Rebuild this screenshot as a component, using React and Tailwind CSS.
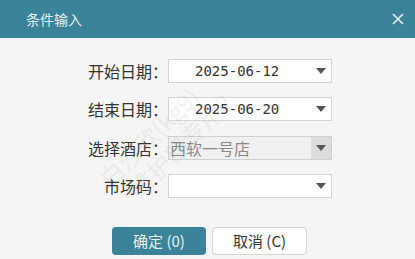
import React from 'react';

const Arrow = () => (
  <svg width="10" height="6" viewBox="0 0 10 6" className="block">
    <path d="M0 0 L10 0 L5 6 Z" fill="#555555" />
  </svg>
);

const rows = [
  { label: '开始日期：', value: '2025-06-12', type: 'date' },
  { label: '结束日期：', value: '2025-06-20', type: 'date' },
  { label: '选择酒店：', value: '西软一号店', type: 'disabled' },
  { label: '市场码：', value: '', type: 'empty' },
];

const Field = ({ row }) => {
  const disabled = row.type === 'disabled';
  return (
    <div
      className={`flex h-[24px] w-[164px] items-center border ${
        disabled ? 'border-[#d0d0d0] bg-[#f0f0f0]' : 'border-[#d4d4d4] bg-white'
      }`}
    >
      {row.type === 'date' && (
        <span className="flex-1 pl-[26px] font-['DejaVu_Sans_Mono',monospace] text-[14px] leading-none text-[#333]">
          {row.value}
        </span>
      )}
      {disabled && (
        <span className="flex-1 pl-[1px] text-[16px] leading-none text-[#8a8a8a]">{row.value}</span>
      )}
      {row.type === 'empty' && <span className="flex-1" />}
      <div
        className={`flex h-full w-[20px] items-center justify-center ${disabled ? 'bg-[#dcdcdc]' : ''}`}
      >
        <Arrow />
      </div>
    </div>
  );
};

const App = () => {
  return (
    <div className="relative flex h-[259px] w-[415px] flex-col overflow-hidden bg-[#f5f5f5] font-['Noto_Sans_CJK_SC',sans-serif]">
      {/* Title bar */}
      <div className="flex h-[38px] items-center justify-between bg-[#3a8399] pl-[26px] pr-[10px]">
        <span className="text-[14px] text-[#e6eef1]">条件输入</span>
        <svg width="12" height="12" viewBox="0 0 12 12" className="mr-[1px]">
          <path d="M1 1 L11 11 M11 1 L1 11" stroke="#e6eef1" strokeWidth="1.6" />
        </svg>
      </div>

      {/* Form */}
      <div className="flex flex-col gap-[14.3px] pt-[21px]">
        {rows.map((row) => (
          <div key={row.label} className="flex items-center">
            <div className="w-[168px] text-right text-[16px] leading-none text-[#333]">{row.label}</div>
            <Field row={row} />
          </div>
        ))}
      </div>

      {/* Buttons */}
      <div className="mt-[29px] flex justify-center gap-[6px] pl-[4px]">
        <button className="h-[28px] w-[94px] rounded-[4px] bg-[#3a8399] text-[15px] text-[#e8f0f2]">
          确定 (0)
        </button>
        <button className="h-[28px] w-[95px] rounded-[4px] border border-[#d4d4d4] bg-white text-[15px] text-[#333]">
          取消 (C)
        </button>
      </div>

      {/* Watermark */}
      <div className="pointer-events-none absolute left-[92px] top-[112px] -rotate-45 select-none text-[24px] leading-[28px] text-[#9a9a9a] opacity-[0.12]">
        <div>白沙欣(kg9)</div>
        <div className="pl-[14px]">维护部专用2</div>
      </div>
    </div>
  );
};

export default App;
